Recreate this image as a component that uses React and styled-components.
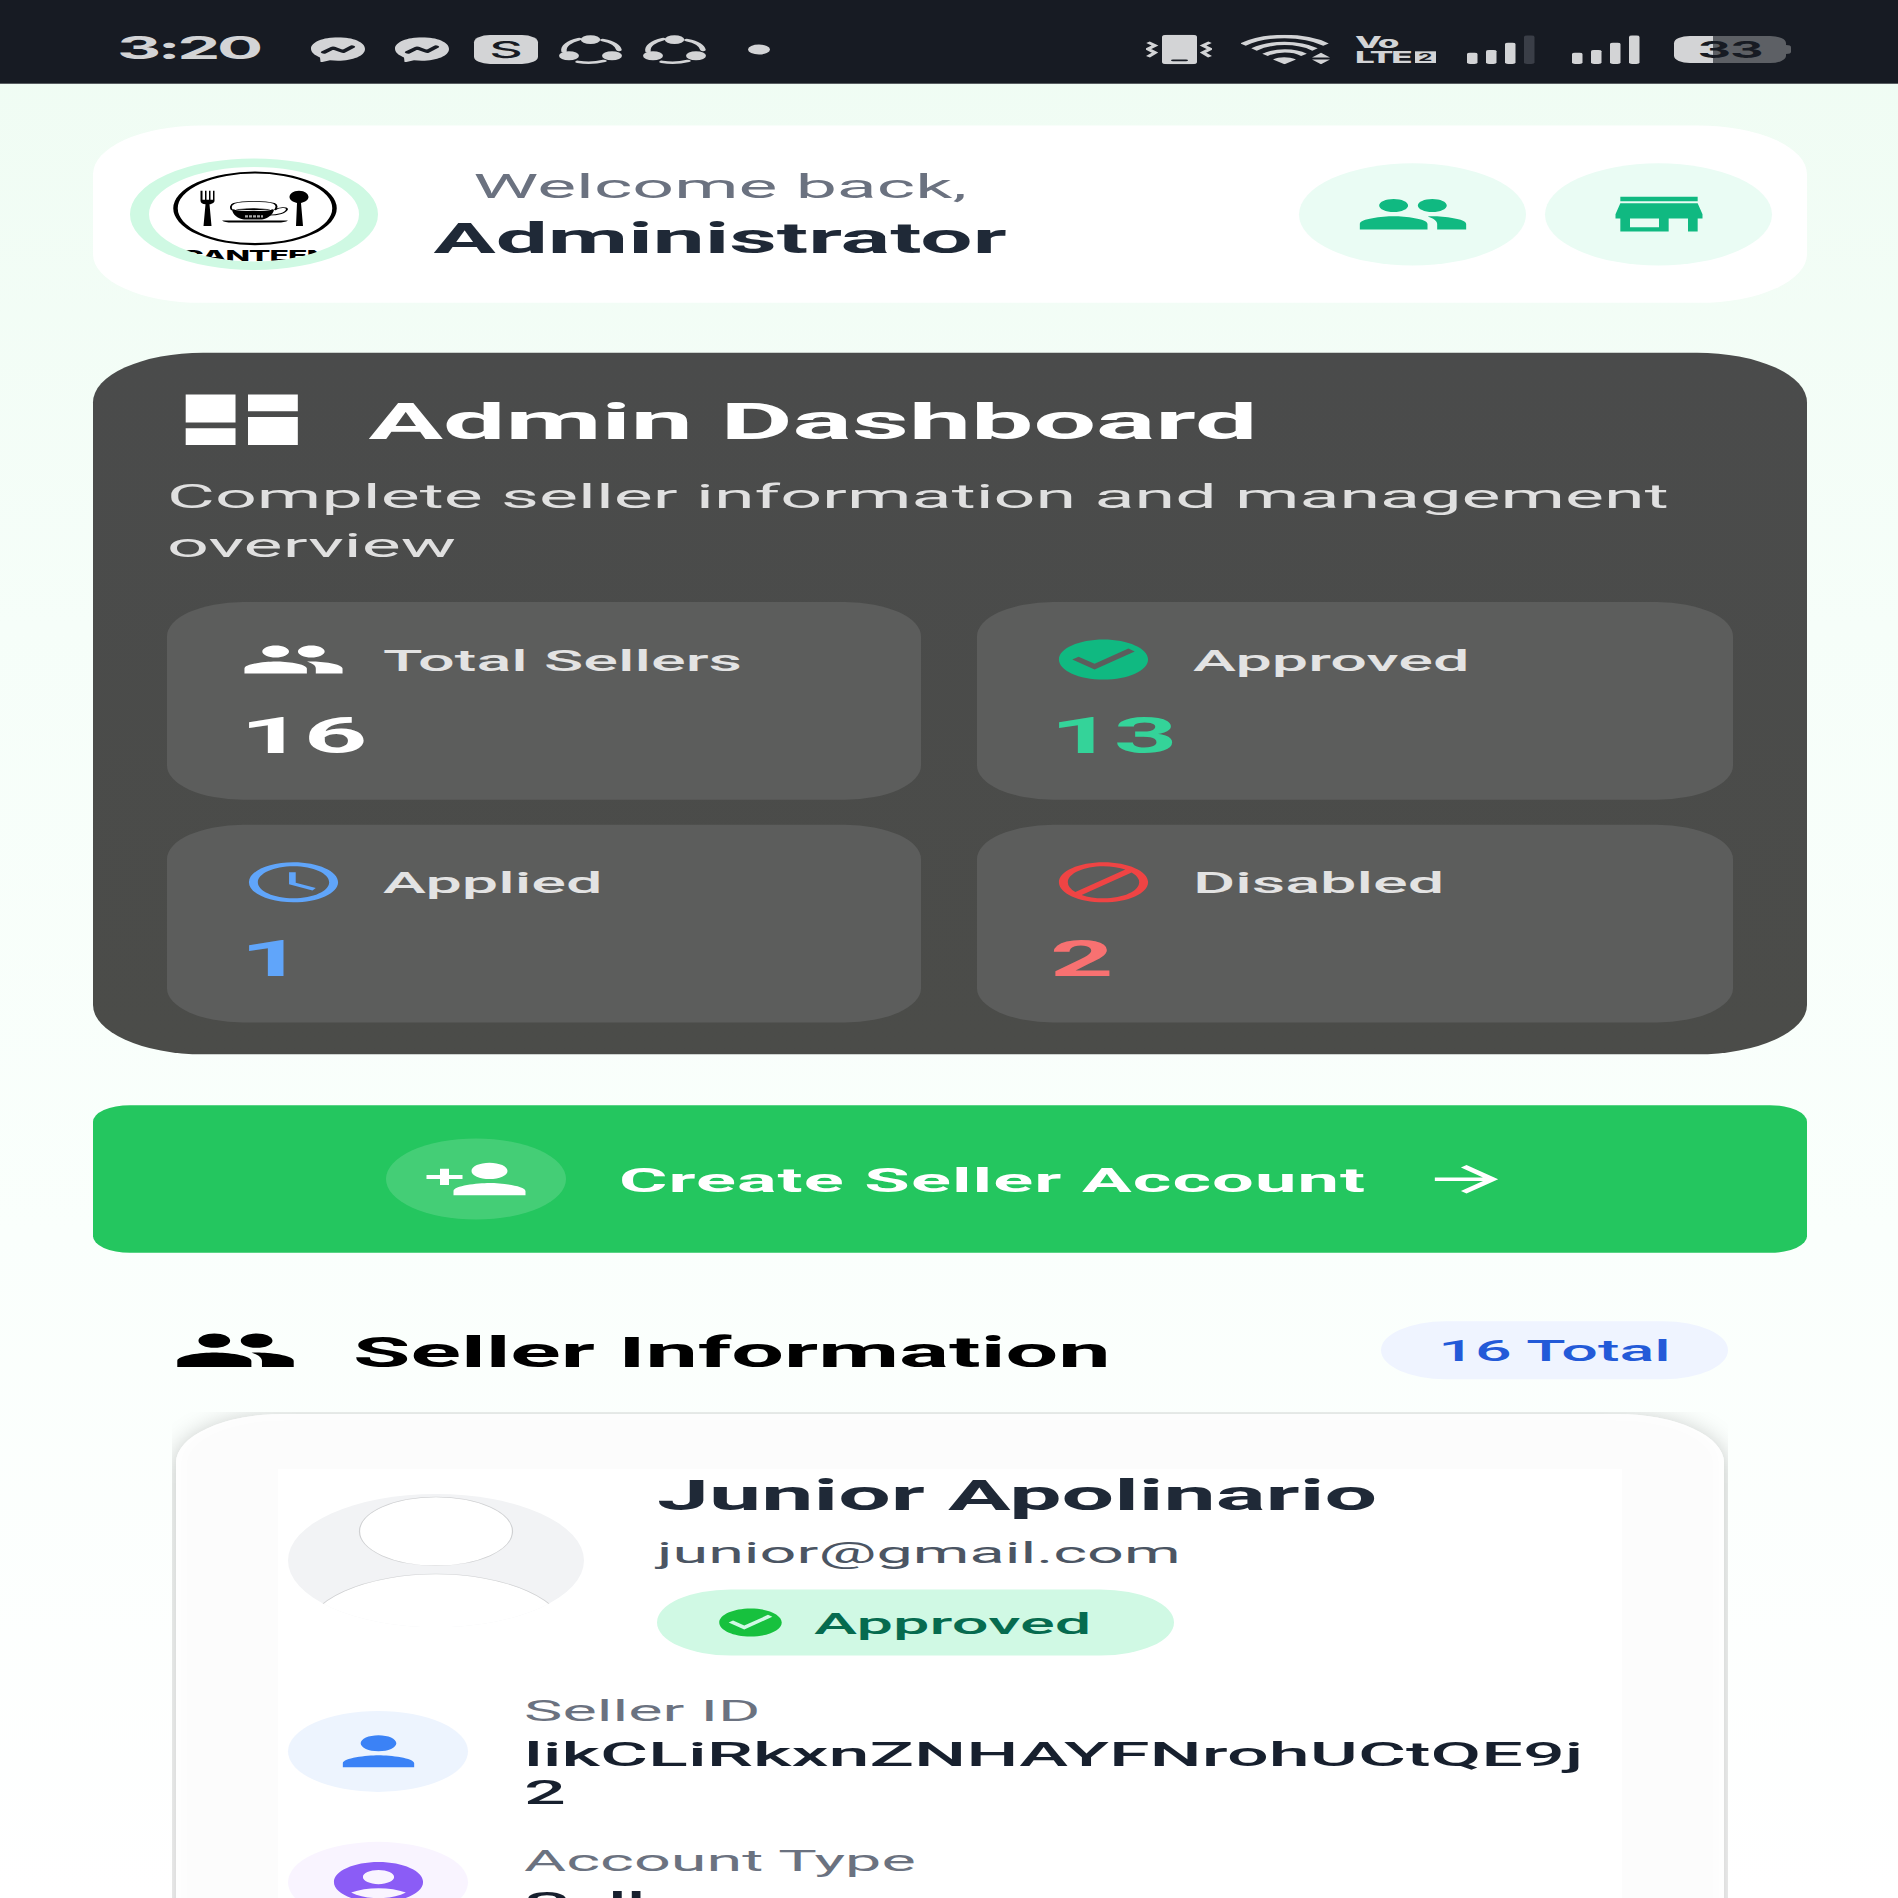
import React from "react";
import styled, { createGlobalStyle } from "styled-components";
import {
  MdAccessTime,
  MdAccountCircle,
  MdArrowForward,
  MdBlock,
  MdCheckCircle,
  MdDashboard,
  MdPeople,
  MdPerson,
  MdPersonAdd,
  MdStore,
} from "react-icons/md";

const GlobalStyle = createGlobalStyle`
  html, body { margin: 0; padding: 0; background: #fff; overflow: hidden; }
  *, *::before, *::after { box-sizing: border-box; }
  svg { display: block; flex: none; }
`;

const Viewport = styled.div`
  width: 1898px;
  height: 1898px;
  overflow: hidden;
`;

/* A 9:20 phone screen, squeezed vertically into the square viewport. */
const Screen = styled.div`
  width: 1898px;
  height: 4218px;
  overflow: hidden;
  transform: scaleY(0.45);
  transform-origin: 0 0;
  display: flex;
  flex-direction: column;
  background: linear-gradient(180deg, #effcf3 0%, #f6fef9 33%, #fafffc 65%, #ffffff 100%);
  font-family: Roboto, "Liberation Sans", sans-serif;
`;

const Text = styled.div`
  font-size: ${(p) => p.$size}px;
  font-weight: ${(p) => p.$weight || 400};
  line-height: ${(p) => p.$line}px;
  letter-spacing: ${(p) => p.$spacing || 0}px;
  color: ${(p) => p.$color};
  margin-top: ${(p) => p.$top || 0}px;
  white-space: ${(p) => (p.$wrap ? "normal" : "nowrap")};
  word-break: ${(p) => (p.$breakAll ? "break-all" : "normal")};
`;

/* ---------- status bar ---------- */

const StatusBar = styled.header`
  flex: none;
  height: 186px;
  padding: 34px 107px 0 117px;
  display: flex;
  align-items: center;
  justify-content: space-between;
  background: #171b23;
  color: #d3d4d6;
`;

const StatusGroup = styled.div`
  display: flex;
  align-items: center;
`;

const Slot = styled.div`
  margin-left: ${(p) => p.$gap}px;
`;

const Clock = styled.div`
  width: 164px;
  font: 700 68.5px/70px Inter, Roboto, sans-serif;
  letter-spacing: -3.4px;
  margin-top: -4px;
  white-space: nowrap;
`;

const LetterTile = styled.div`
  width: 64px;
  height: 64px;
  border-radius: 16px;
  background: #d3d4d6;
  color: #171b23;
  font: 500 52px/64px Inter, Roboto, sans-serif;
  text-align: center;
`;

const Dot = styled.div`
  width: 22px;
  height: 22px;
  border-radius: 50%;
  background: #d3d4d6;
`;

const Volte = styled.div`
  width: 83px;
  height: 64px;
  display: flex;
  flex-direction: column;
  gap: 4px;
  font: 800 35px/30px Inter, Roboto, sans-serif;
  letter-spacing: -2px;
  white-space: nowrap;
`;

const VolteRow = styled.div`
  display: flex;
  align-items: center;
  height: 30px;
  gap: 4px;
`;

const SimTag = styled.span`
  width: 21px;
  height: 26px;
  background: #d3d4d6;
  color: #171b23;
  font: 700 23px/26px Inter, Roboto, sans-serif;
  text-align: center;
  letter-spacing: 0;
`;

const BatteryShape = styled.div`
  display: flex;
  align-items: center;
`;

const BatteryBody = styled.div`
  width: 112px;
  height: 60px;
  border-radius: 16px;
  background: linear-gradient(90deg, #d3d4d6 35%, #5d6065 35%);
  color: #171b23;
  font: 700 52px/60px Inter, Roboto, sans-serif;
  letter-spacing: -1px;
  text-align: center;
`;

const BatteryNub = styled.div`
  width: 5px;
  height: 20px;
  border-radius: 0 5px 5px 0;
  background: #5d6065;
`;

const MessengerIcon = () => (
  <svg width="54" height="55" viewBox="0 0 54 55">
    <path
      fill="#d3d4d6"
      d="M27 0C12 0 0 11 0 25.500c0 8 3.500 14.500 9 19L9.500 54c0 1 .8 1.300 1.600.9L19 51c2.600.7 5.300 1 8 1 15 0 27-11 27-26S42 0 27 0Z"
    />
    <path
      fill="none"
      stroke="#171b23"
      strokeWidth="6"
      strokeLinejoin="round"
      strokeLinecap="round"
      d="M13 33 22 23.500l10 8L41 21"
    />
  </svg>
);

const RingIcon = () => (
  <svg width="63" height="64" viewBox="0 0 63 64">
    <g fill="none" stroke="#d3d4d6" strokeLinecap="round">
      <path strokeWidth="5.500" d="M5 36C4 25 10 14 20 9" />
      <path strokeWidth="5.500" d="M44 11c9 4 15 12 16 22" />
      <path strokeWidth="5.500" d="M19 59.500c9 3 18 2 26-2" />
    </g>
    <g fill="#d3d4d6">
      <circle cx="31.500" cy="10" r="9.800" />
      <circle cx="10" cy="46" r="10" />
      <circle cx="53" cy="46" r="10" />
    </g>
  </svg>
);

const VibrateIcon = () => (
  <svg width="66" height="66" viewBox="0 0 66 66">
    <rect x="16" y="0" width="35" height="66" rx="5" fill="#d3d4d6" />
    <path d="M27 57h13" stroke="#171b23" strokeWidth="4" strokeLinecap="round" />
    <g fill="none" stroke="#d3d4d6" strokeWidth="5">
      <path d="M2 17l7 7-7 8 7 8-7 9" />
      <path d="M64 17l-7 7 7 8-7 8 7 9" />
    </g>
  </svg>
);

const WifiIcon = () => (
  <svg width="90" height="66" viewBox="0 0 90 66">
    <g fill="none" stroke="#d3d4d6" strokeWidth="7.500">
      <path d="M2 22C24-2 63-2 85 22" />
      <path d="M13 33c17-18 44-18 61 0" />
      <path d="M24 45c11-12 29-12 39 0" />
    </g>
    <g fill="#d3d4d6">
      <path d="M32 55c6-6 16-6 23 0L43.500 66Z" />
      <path d="M71 51l9-11 9 11ZM71 55l9 11 9-11Z" />
    </g>
  </svg>
);

const SignalIcon = ({ level }) => (
  <svg width="68" height="64" viewBox="0 0 68 64">
    {[25, 31, 47, 63].map((h, i) => (
      <rect
        key={h}
        x={i * 19}
        y={64 - h}
        width="10.500"
        height={h}
        rx="3"
        fill={i < level ? "#d3d4d6" : "#3a3e47"}
      />
    ))}
  </svg>
);

/* ---------- page ---------- */

const Page = styled.main`
  flex: 1;
  min-height: 0;
  padding: 93px 91px 0 93px;
  display: flex;
  flex-direction: column;
`;

const HeaderCard = styled.section`
  flex: none;
  height: 394px;
  padding: 0 35px 0 37px;
  border-radius: 108px;
  background: #fff;
  display: flex;
  align-items: center;
`;

const LogoRing = styled.div`
  flex: none;
  width: 248px;
  height: 248px;
  border: 19px solid #cff9e3;
  border-radius: 50%;
  overflow: hidden;
  background: #fff;
`;

const Greeting = styled.div`
  width: 572px;
  margin-left: 56px;
  display: flex;
  flex-direction: column;
  align-items: center;
`;

const HeaderActions = styled.nav`
  margin-left: auto;
  display: flex;
  gap: 19px;
`;

const RoundIcon = styled.div`
  flex: none;
  width: ${(p) => p.$size}px;
  height: ${(p) => p.$size}px;
  border-radius: 50%;
  display: flex;
  align-items: center;
  justify-content: center;
  background: ${(p) => p.$bg};
  color: ${(p) => p.$color};
`;

const DashboardCard = styled.section`
  flex: none;
  height: 1559px;
  margin-top: 111px;
  padding: 74px 73px 0 74px;
  border-radius: 110px;
  background: linear-gradient(180deg, #4a4b4b, #4b4c49);
`;

const TitleRow = styled.div`
  display: flex;
  align-items: center;
  gap: ${(p) => p.$gap}px;
`;

const StatGrid = styled.div`
  margin-top: 69px;
  display: grid;
  grid-template-columns: 754px 756px;
  grid-auto-rows: 439px;
  gap: 56px;
`;

const StatTile = styled.div`
  padding: 74px 73px 0;
  border-radius: 76px;
  background: #5c5d5c;
`;

const CreateButton = styled.button`
  flex: none;
  height: 328px;
  margin: 113px 0 0;
  padding: 0;
  border: 0;
  border-radius: 37px;
  background: #24c65f;
  color: #fff;
  font-family: inherit;
  display: flex;
  align-items: center;
  justify-content: center;
  gap: 53px;
`;

const SectionHeader = styled.div`
  flex: none;
  margin: 152px 0 0;
  padding: 0 79px;
  display: flex;
  align-items: center;
  justify-content: space-between;
`;

const CountBadge = styled.div`
  width: 347px;
  height: 129px;
  border-radius: 65px;
  background: #eff4ff;
  display: flex;
  align-items: center;
  justify-content: center;
`;

const ListArea = styled.div`
  flex: none;
  height: 1090px;
  margin: 73px 79px 0;
  padding: 4px 4px 0;
  overflow: hidden;
`;

const SellerCard = styled.article`
  height: 1500px;
  padding: 123px 102px 0;
  border-radius: 108px;
  background: #fcfcfc;
  box-shadow:
    0 10px 36px rgba(0, 0, 0, 0.25),
    inset 0 0 12px 8px #fefefe;
`;

const SellerBody = styled.div`
  height: 1300px;
  padding: 7px 20px 0 10px;
  background: #fff;
`;

const SellerTop = styled.div`
  display: flex;
  align-items: flex-start;
`;

const AvatarSlot = styled.div`
  padding-top: 48px;
  margin-right: 73px;
`;

const StatusPill = styled.div`
  width: 517px;
  height: 147px;
  margin-top: 36px;
  padding-left: 56px;
  border-radius: 74px;
  background: #d0f9e4;
  color: #17c13e;
  display: flex;
  align-items: center;
  gap: 26px;
`;

const InfoRow = styled.div`
  display: flex;
  align-items: center;
  gap: 56px;
  margin-top: ${(p) => p.$top}px;
`;

const InfoText = styled.div`
  width: 1080px;
  padding-top: 6px;
`;

const LogoArt = () => (
  <svg width="210" height="210" viewBox="0 0 210 210">
    <circle cx="106" cy="92" r="79.500" fill="none" stroke="#000" strokeWidth="4.500" />
    <g fill="#000">
      <path d="M52 53h1.500v20h2.500V53h1.500v20h2.500V53h1.500v20h2.500V53h1.500v22c0 5-3 7-5 8l2 48h-8l2-48c-3-1-5-3-5-8V53Z" />
      <path d="M150 53c6 0 9.500 7 9.500 14s-3.500 11-7.500 13l2 51h-7l1-51c-4-2-7.500-6-7.500-13s3.500-14 9.500-14Z" />
      <path d="M83 95c9-5 33-5 42 0-1 11-6 19-12 22H95c-7-3-11-11-12-22Z" />
      <path d="M73 119h66c-2 3-6 4.500-10 4.500H83c-5 0-8-1.500-10-4.500Z" />
    </g>
    <path
      fill="none"
      stroke="#000"
      strokeWidth="2"
      d="M83 96c-2-6-1-12 2-15 9-6 31-6 40 0 3 3 3 9 1 15"
    />
    <ellipse cx="104" cy="94" rx="18" ry="3" fill="none" stroke="#fff" strokeWidth="1.500" />
    <path fill="none" stroke="#000" strokeWidth="2" d="M126 95c4-5 12-7 12-1-1 8-9 13-18 13" />
    <path stroke="#aaa" strokeWidth="5" strokeDasharray="3 1" d="M96 110h18" />
    <text
      x="106"
      y="208"
      textAnchor="middle"
      fontFamily="Inter, Roboto, sans-serif"
      fontWeight="800"
      fontSize="32"
      letterSpacing="-1"
    >
      CANTEEN
    </text>
  </svg>
);

const BlankAvatar = () => (
  <svg width="296" height="296" viewBox="0 0 296 296">
    <defs>
      <clipPath id="avatar-disc">
        <circle cx="148" cy="148" r="148" />
      </clipPath>
    </defs>
    <g clipPath="url(#avatar-disc)">
      <rect width="296" height="296" fill="#f2f3f5" />
      <circle cx="148" cy="83" r="76.500" fill="#fff" stroke="#cfd0d2" strokeWidth="1.200" />
      <circle cx="148" cy="308" r="130" fill="#fff" stroke="#cfd0d2" strokeWidth="1.200" />
    </g>
  </svg>
);

const stats = [
  { label: "Total Sellers", value: "16", icon: MdPeople, tint: "#ffffff", color: "#ffffff" },
  { label: "Approved", value: "13", icon: MdCheckCircle, tint: "#10b981", color: "#34d399" },
  { label: "Applied", value: "1", icon: MdAccessTime, tint: "#60a5fa", color: "#60a5fa" },
  { label: "Disabled", value: "2", icon: MdBlock, tint: "#ef4444", color: "#f87171" },
];

const details = [
  {
    label: "Seller ID",
    value: "likCLiRkxnZNHAYFNrohUCtQE9j2",
    icon: MdPerson,
    bg: "#edf4fe",
    color: "#3b82f6",
    top: 79,
  },
  {
    label: "Account Type",
    value: "Seller",
    icon: MdAccountCircle,
    bg: "#f9f4ff",
    color: "#8b5cf6",
    top: 65,
  },
];

export default function App() {
  return (
    <Viewport>
      <GlobalStyle />
      <Screen>
        <StatusBar>
          <StatusGroup>
            <Clock>3:20</Clock>
            <Slot $gap={30}>
              <MessengerIcon />
            </Slot>
            <Slot $gap={30}>
              <MessengerIcon />
            </Slot>
            <Slot $gap={25}>
              <LetterTile>S</LetterTile>
            </Slot>
            <Slot $gap={21}>
              <RingIcon />
            </Slot>
            <Slot $gap={21}>
              <RingIcon />
            </Slot>
            <Slot $gap={42}>
              <Dot />
            </Slot>
          </StatusGroup>
          <StatusGroup>
            <VibrateIcon />
            <Slot $gap={29}>
              <WifiIcon />
            </Slot>
            <Slot $gap={24}>
              <Volte>
                <VolteRow>Vo</VolteRow>
                <VolteRow>
                  LTE<SimTag>2</SimTag>
                </VolteRow>
              </Volte>
            </Slot>
            <Slot $gap={29}>
              <SignalIcon level={3} />
            </Slot>
            <Slot $gap={37}>
              <SignalIcon level={4} />
            </Slot>
            <Slot $gap={34}>
              <BatteryShape>
                <BatteryBody>33</BatteryBody>
                <BatteryNub />
              </BatteryShape>
            </Slot>
          </StatusGroup>
        </StatusBar>

        <Page>
          <HeaderCard>
            <LogoRing>
              <LogoArt />
            </LogoRing>
            <Greeting>
              <Text $size={73.4} $line={100} $color="#6b7280" $top={2}>
                Welcome back,
              </Text>
              <Text $size={92.7} $line={115} $weight={700} $color="#1f2937" $top={9}>
                Administrator
              </Text>
            </Greeting>
            <HeaderActions>
              <RoundIcon $size={227} $bg="#eafcf4" $color="#10b981">
                <MdPeople size={116} />
              </RoundIcon>
              <RoundIcon $size={227} $bg="#eafcf4" $color="#10b981">
                <MdStore size={116} />
              </RoundIcon>
            </HeaderActions>
          </HeaderCard>

          <DashboardCard>
            <TitleRow $gap={52}>
              <MdDashboard size={149.5} color="#fff" />
              <Text $size={110.9} $line={140} $weight={700} $color="#fff" $top={9}>
                Admin Dashboard
              </Text>
            </TitleRow>
            <Text $size={73.6} $line={109.6} $color="#e0e0e0" $top={42} $wrap>
              Complete seller information and management overview
            </Text>
            <StatGrid>
              {stats.map(({ label, value, icon: Icon, tint, color }) => (
                <StatTile key={label}>
                  <TitleRow $gap={36}>
                    <Icon size={107} color={tint} />
                    <Text $size={64.8} $line={80} $weight={500} $color="#e3e3e3" $top={6}>
                      {label}
                    </Text>
                  </TitleRow>
                  <Text $size={111} $line={130} $weight={700} $color={color} $top={51}>
                    {value}
                  </Text>
                </StatTile>
              ))}
            </StatGrid>
          </DashboardCard>

          <CreateButton>
            <RoundIcon $size={180} $bg="rgba(255, 255, 255, 0.15)" $color="#fff">
              <MdPersonAdd size={108} />
            </RoundIcon>
            <Text $size={74} $line={100} $weight={700} $spacing={1.08} $color="#fff" $top={5}>
              Create Seller Account
            </Text>
            <MdArrowForward size={95} />
          </CreateButton>

          <SectionHeader>
            <TitleRow $gap={54}>
              <MdPeople size={127} color="#000" />
              <Text $size={93.4} $line={110} $weight={700} $color="#000" $top={10}>
                Seller Information
              </Text>
            </TitleRow>
            <CountBadge>
              <Text $size={64.6} $line={80} $weight={500} $color="#235ad8" $top={5}>
                16 Total
              </Text>
            </CountBadge>
          </SectionHeader>

          <ListArea>
            <SellerCard>
              <SellerBody>
                <SellerTop>
                  <AvatarSlot>
                    <BlankAvatar />
                  </AvatarSlot>
                  <div>
                    <Text $size={93.2} $line={105} $weight={700} $color="#1f2937">
                      Junior Apolinario
                    </Text>
                    <Text $size={64.7} $line={90} $color="#4b5563" $top={29}>
                      junior@gmail.com
                    </Text>
                    <StatusPill>
                      <MdCheckCircle size={75} />
                      <Text $size={65} $line={80} $weight={500} $color="#066b4f" $top={6}>
                        Approved
                      </Text>
                    </StatusPill>
                  </div>
                </SellerTop>
                {details.map(({ label, value, icon: Icon, bg, color, top }) => (
                  <InfoRow key={label} $top={top}>
                    <RoundIcon $size={180} $bg={bg} $color={color}>
                      <Icon size={107} />
                    </RoundIcon>
                    <InfoText>
                      <Text $size={64.7} $line={76} $color="#6b7280">
                        {label}
                      </Text>
                      <Text $size={73.7} $line={84.4} $weight={500} $color="#17202e" $top={17} $wrap $breakAll>
                        {value}
                      </Text>
                    </InfoText>
                  </InfoRow>
                ))}
              </SellerBody>
            </SellerCard>
          </ListArea>
        </Page>
      </Screen>
    </Viewport>
  );
}
